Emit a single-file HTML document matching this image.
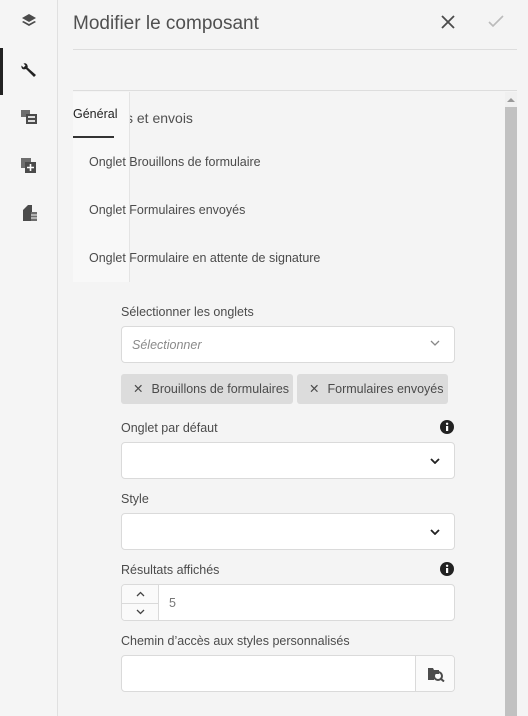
<!DOCTYPE html><html><head><meta charset="utf-8"><style>
body{margin:0;width:528px;height:716px;background:#f4f4f4;font-family:"Liberation Sans",sans-serif;color:#4b4b4b;position:relative;overflow:hidden}
.a{position:absolute}
.lbl{position:absolute;left:121px;font-size:12.5px;color:#4b4b4b}
.fld{position:absolute;left:121px;width:332px;height:35px;background:#fff;border:1px solid #dadada;border-radius:4px;overflow:hidden}
.chev{position:absolute;right:14px;top:13px}
.tab{position:absolute;left:89px;font-size:12.5px;color:#4b4b4b}
</style></head><body>
<div class="a" style="left:0;top:0;width:57px;height:716px;background:#f5f5f5;border-right:1px solid #e0e0e0"></div>
<div class="a" style="left:0;top:48px;width:3px;height:47px;background:#222"></div>
<svg class="a" style="left:21px;top:13px" width="16" height="16" viewBox="0 0 16 16"><path d="M8 1L15 5L8 9L1 5Z" fill="#4b4b4b"/><path d="M2.5 8L8 11L13.5 8L15 9L8 13L1 9Z" fill="#4b4b4b"/></svg>
<svg class="a" style="left:20px;top:62px" width="18" height="16" viewBox="0 0 18 16"><path d="M1.5 3.5L3.5 5.5L5.5 3.5L3.5 1.5Q6.5 0.5 7.5 3.5Q8 5 7.5 5.5L16 13L14 15L6 7Q3 8 2 6.5Q1 5 1.5 3.5Z" fill="#222"/></svg>
<svg class="a" style="left:20px;top:109px" width="18" height="16"><rect x="1" y="1" width="9" height="7" fill="#6e6e6e"/><rect x="6" y="5" width="11" height="10" fill="#4b4b4b"/><rect x="8" y="7" width="7" height="2" fill="#ddd"/><rect x="8" y="11" width="7" height="2" fill="#ddd"/></svg>
<svg class="a" style="left:20px;top:157px" width="18" height="16"><rect x="1" y="1" width="10" height="10" fill="#6e6e6e"/><rect x="5" y="5" width="11" height="11" fill="#4b4b4b"/><path d="M10.5 7v7M7 10.5h7" stroke="#fff" stroke-width="1.6"/></svg>
<svg class="a" style="left:22px;top:204px" width="16" height="18"><path d="M1 6L6 1H10V17H1Z" fill="#4b4b4b"/><rect x="9" y="8" width="6" height="9" fill="#6e6e6e"/><path d="M9 11h6M9 14h6" stroke="#f5f5f5"/></svg>
<div class="a" style="left:73px;top:13px;font-size:19px;color:#505050">Modifier le composant</div>
<svg class="a" style="left:441px;top:15px" width="14" height="14"><path d="M1 1L13 13M13 1L1 13" stroke="#4b4b4b" stroke-width="1.8"/></svg>
<svg class="a" style="left:488px;top:14px" width="16" height="14"><path d="M1 8L5 12L15 2" stroke="#bbb" stroke-width="1.6" fill="none"/></svg>
<div class="a" style="left:73px;top:49px;width:444px;height:1px;background:#ddd"></div>
<div class="a" style="left:73px;top:90px;width:444px;height:1px;background:#ddd"></div>
<div class="a" style="left:505px;top:92px;width:12px;height:624px;background:#f0f0f0"></div>
<div class="a" style="left:505px;top:107px;width:12px;height:609px;background:#c1c1c1"></div>
<svg class="a" style="left:506px;top:97px" width="10" height="6"><path d="M1 5L5 1L9 5Z" fill="#999"/></svg>
<div class="a" style="left:126px;top:110px;font-size:14px;color:#505050">s et envois</div>
<div class="a" style="left:73px;top:92px;width:56px;height:190px;background:#f8f8f8;border-right:1px solid #e4e4e4"></div>
<div class="a" style="left:73px;top:107px;font-size:12.5px;color:#222">Général</div>
<div class="a" style="left:73px;top:136px;width:41px;height:2px;background:#333"></div>
<div class="tab" style="top:155px">Onglet Brouillons de formulaire</div>
<div class="tab" style="top:203px">Onglet Formulaires envoyés</div>
<div class="tab" style="top:251px">Onglet Formulaire en attente de signature</div>
<div class="lbl" style="top:305px">Sélectionner les onglets</div>
<div class="fld" style="top:326px"><span class="a" style="left:10px;top:11px;font-size:12.5px;font-style:italic;color:#8a8a8a">Sélectionner</span><svg class="chev" width="10" height="6"><path d="M1 1L5 5L9 1" stroke="#888" stroke-width="1.3" fill="none"/></svg></div>
<div class="a" style="left:121px;top:374px;width:172px;height:30px;background:#dcdcdc;border-radius:3px;font-size:12.5px;line-height:30px;color:#4b4b4b"><span style="margin-left:12px;margin-right:8px">✕</span>Brouillons de formulaires</div>
<div class="a" style="left:297px;top:374px;width:151px;height:30px;background:#dcdcdc;border-radius:3px;font-size:12.5px;line-height:30px;color:#4b4b4b"><span style="margin-left:12px;margin-right:8px">✕</span>Formulaires envoyés</div>
<div class="lbl" style="top:421px">Onglet par défaut</div>
<svg class="a" style="left:440px;top:420px" width="14" height="14"><circle cx="7" cy="7" r="7" fill="#222"/><rect x="6" y="6" width="2.2" height="5" fill="#fff"/><circle cx="7.1" cy="3.8" r="1.2" fill="#fff"/></svg>
<div class="fld" style="top:442px"><svg class="chev" width="10" height="6" style="top:15px"><path d="M1 1L5 5L9 1" stroke="#222" stroke-width="1.8" fill="none"/></svg></div>
<div class="lbl" style="top:492px">Style</div>
<div class="fld" style="top:513px"><svg class="chev" width="10" height="6" style="top:15px"><path d="M1 1L5 5L9 1" stroke="#222" stroke-width="1.8" fill="none"/></svg></div>
<div class="lbl" style="top:563px">Résultats affichés</div>
<svg class="a" style="left:440px;top:562px" width="14" height="14"><circle cx="7" cy="7" r="7" fill="#222"/><rect x="6" y="6" width="2.2" height="5" fill="#fff"/><circle cx="7.1" cy="3.8" r="1.2" fill="#fff"/></svg>
<div class="fld" style="top:584px"><div class="a" style="left:0;top:0;width:36px;height:35px;border-right:1px solid #dadada;background:#fafafa"></div><div class="a" style="left:0;top:18px;width:36px;height:1px;background:#dadada"></div>
<svg class="a" style="left:14px;top:6px" width="9" height="6"><path d="M1 5L4.5 1.5L8 5" stroke="#444" stroke-width="1.3" fill="none"/></svg>
<svg class="a" style="left:14px;top:24px" width="9" height="6"><path d="M1 1L4.5 4.5L8 1" stroke="#444" stroke-width="1.3" fill="none"/></svg>
<span class="a" style="left:47px;top:11px;font-size:12.5px;color:#777">5</span></div>
<div class="lbl" style="top:634px">Chemin d’accès aux styles personnalisés</div>
<div class="fld" style="top:655px"><div class="a" style="left:293px;top:0;width:39px;height:35px;border-left:1px solid #dadada;background:#fafafa"></div>
<svg class="a" style="left:305px;top:10px" width="18" height="16"><path d="M1 2H6L7 4H12V8H1Z" fill="#4b4b4b"/><rect x="1" y="4" width="6" height="10" fill="#4b4b4b"/><circle cx="11" cy="10" r="4" fill="none" stroke="#4b4b4b" stroke-width="2"/><path d="M13.5 12.5L17 15.5" stroke="#4b4b4b" stroke-width="2"/></svg></div>
</body></html>
